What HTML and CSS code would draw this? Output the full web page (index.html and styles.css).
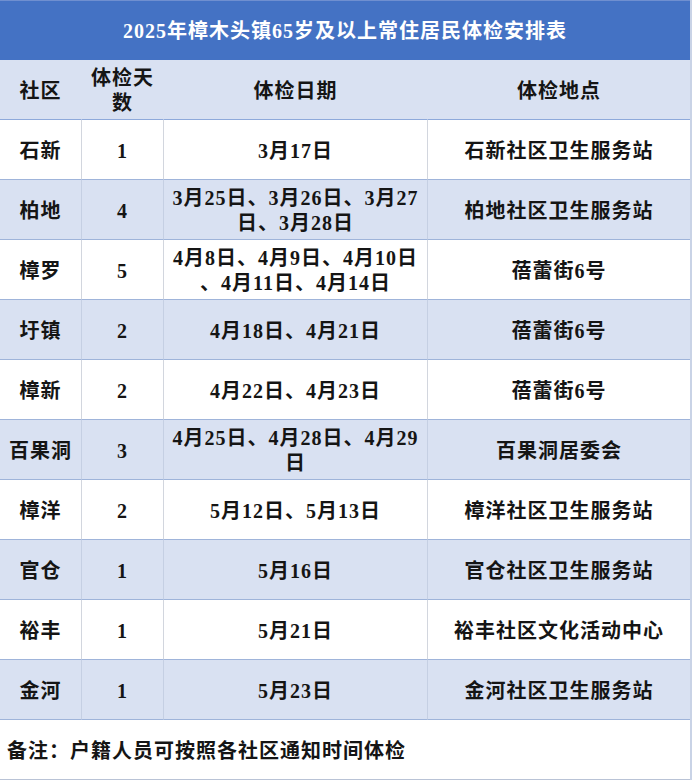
FILE: index.html
```html
<!DOCTYPE html>
<html lang="zh">
<head>
<meta charset="utf-8">
<title>2025年樟木头镇65岁及以上常住居民体检安排表</title>
<link rel="stylesheet" href="styles.css">
</head>
<body>
<table class="sheet">
  <colgroup>
    <col class="c1"><col class="c2"><col class="c3"><col class="c4">
  </colgroup>
  <tr class="title"><td colspan="4">2025年樟木头镇65岁及以上常住居民体检安排表</td></tr>
  <tr class="head">
    <td>社区</td><td>体检天<br>数</td><td>体检日期</td><td>体检地点</td>
  </tr>
  <tr class="w"><td>石新</td><td>1</td><td>3月17日</td><td>石新社区卫生服务站</td></tr>
  <tr class="b"><td>柏地</td><td>4</td><td>3月25日、3月26日、3月27<br>日、3月28日</td><td>柏地社区卫生服务站</td></tr>
  <tr class="w"><td>樟罗</td><td>5</td><td>4月8日、4月9日、4月10日<br>、4月11日、4月14日</td><td>蓓蕾街6号</td></tr>
  <tr class="b"><td>圩镇</td><td>2</td><td>4月18日、4月21日</td><td>蓓蕾街6号</td></tr>
  <tr class="w"><td>樟新</td><td>2</td><td>4月22日、4月23日</td><td>蓓蕾街6号</td></tr>
  <tr class="b"><td>百果洞</td><td>3</td><td>4月25日、4月28日、4月29<br>日</td><td>百果洞居委会</td></tr>
  <tr class="w"><td>樟洋</td><td>2</td><td>5月12日、5月13日</td><td>樟洋社区卫生服务站</td></tr>
  <tr class="b"><td>官仓</td><td>1</td><td>5月16日</td><td>官仓社区卫生服务站</td></tr>
  <tr class="w"><td>裕丰</td><td>1</td><td>5月21日</td><td>裕丰社区文化活动中心</td></tr>
  <tr class="b"><td>金河</td><td>1</td><td>5月23日</td><td>金河社区卫生服务站</td></tr>
  <tr class="note"><td colspan="4">备注：户籍人员可按照各社区通知时间体检</td></tr>
</table>
</body>
</html>
```
FILE: styles.css
```css
html, body {
  margin: 0;
  padding: 0;
  background: #ffffff;
}
.sheet {
  border-collapse: separate;
  border-spacing: 0;
  table-layout: fixed;
  width: 692px;
  border-right: 2px solid #c9d3e6;
  font-family: "Liberation Serif", "Noto Sans CJK SC", serif;
  font-weight: bold;
  font-size: 20px;
  letter-spacing: 1px;
  color: #151515;
}
.c1 { width: 82px; }
.c2 { width: 82px; }
.c3 { width: 264px; }
.c4 { width: 262px; }
.sheet td {
  height: 56px;
  padding: 3px 0 0 0;
  text-align: center;
  vertical-align: middle;
  line-height: 25px;
  white-space: nowrap;
  border-bottom: 1px solid #9fb4da;
  border-right: 1px solid #d2d6de;
}
.sheet td:last-child {
  border-right: none;
}
.title td {
  background: #4472c4;
  color: #ffffff;
  font-size: 20px;
  border-bottom: 1px solid #4472c4;
  border-top: 1px solid #6f8fd0;
  height: 56px;
  padding-top: 2px;
}
.head td {
  background: #d9e1f2;
  border-right: 1px solid #d9e1f2;
  border-bottom: 1px solid #8ea9db;
}
.b td {
  background: #d9e1f2;
  border-right-color: #c5cfe3;
}
.w td {
  background: #ffffff;
}
.note td {
  text-align: left;
  padding-left: 7px;
  background: #ffffff;
  border-bottom: 1px solid #b9c3d6;
}
```
